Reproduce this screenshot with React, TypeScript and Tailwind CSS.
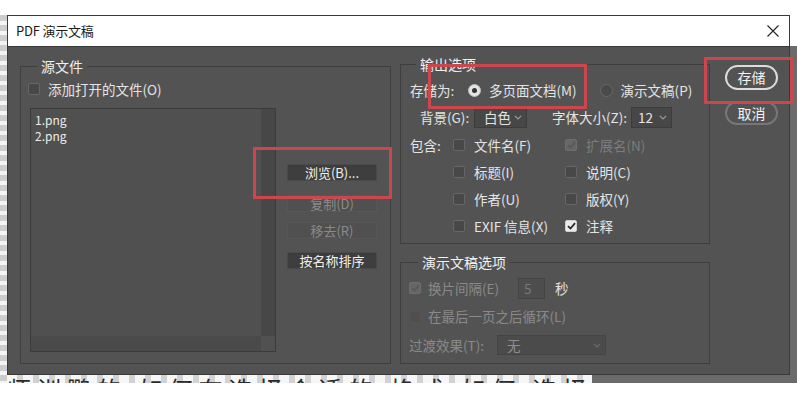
import React from "react";

const FONT = "font-['Microsoft_YaHei','Noto_Sans_CJK_SC','Noto_Sans',sans-serif]";

function Check({ checked = false, disabled = false }: { checked?: boolean; disabled?: boolean }) {
  let cls = "bg-[#484848] border-[#666]";
  if (checked && !disabled) cls = "bg-[#ececec] border-[#cfcfcf]";
  if (disabled && checked) cls = "bg-[#666] border-[#6e6e6e]";
  if (disabled && !checked) cls = "bg-[#4f4f4f] border-[#555]";
  return (
    <span className={`w-[12px] h-[12px] shrink-0 rounded-[2px] border flex items-center justify-center ${cls}`}>
      {checked && (
        <svg width="9" height="8" viewBox="0 0 9 8">
          <path
            d="M1 4.2 L3.5 6.5 L8 1.2"
            fill="none"
            stroke={disabled ? "#595959" : "#2a2a2a"}
            strokeWidth="1.8"
          />
        </svg>
      )}
    </span>
  );
}

function Radio({ on = false }: { on?: boolean }) {
  return on ? (
    <span className="w-[13px] h-[13px] rounded-full bg-[#e4e4e4] border border-[#bdbdbd] flex items-center justify-center shrink-0">
      <span className="w-[5px] h-[5px] rounded-full bg-[#333]" />
    </span>
  ) : (
    <span className="block w-[13px] h-[13px] rounded-full bg-[#4a4a4a] border border-[#686868] shrink-0" />
  );
}

function Chevron({ color = "#9a9a9a" }: { color?: string }) {
  return (
    <svg width="8" height="5" viewBox="0 0 8 5">
      <path d="M0.8 0.8 L4 4 L7.2 0.8" fill="none" stroke={color} strokeWidth="1.2" />
    </svg>
  );
}

function Btn({ children, disabled = false, mt }: { children: React.ReactNode; disabled?: boolean; mt: string }) {
  return (
    <div
      className={`${mt} h-[17px] w-[90px] flex items-center justify-center text-[13px] leading-none border ${
        disabled
          ? "bg-[#505050] border-[#575757] text-[#8a8a8a]"
          : "bg-[#3e3e3e] border-[#4a4a4a] text-[#f0f0f0]"
      }`}
    >
      {children}
    </div>
  );
}

export default function App() {
  return (
    <div className={`relative w-[797px] h-[399px] bg-white overflow-hidden ${FONT}`}>
      <div className="h-[15px]" />
      <div className="flex">
        <div className="w-[7px] h-[368px] bg-[repeating-linear-gradient(to_bottom,#cdcdcd_0px,#cdcdcd_6px,#f4f4f4_6px,#f4f4f4_10px)]" />
        <div className="flex flex-col w-[790px]">
          <div className="flex">
            {/* Dialog */}
            <div className="w-[783px] h-[360px] border border-[#3a3a3a] flex flex-col">
              {/* Title bar */}
              <div className="h-[31px] bg-white border-b border-[#3a3a3a] flex items-center justify-between pl-[8px] pr-[10px] shrink-0">
                <span className="text-[13px] text-[#1a1a1a] tracking-[-0.2px]">PDF 演示文稿</span>
                <svg width="12" height="12" viewBox="0 0 12 12">
                  <path d="M0.5 0.5 L11.5 11.5 M11.5 0.5 L0.5 11.5" stroke="#222" strokeWidth="1.1" />
                </svg>
              </div>
              {/* Body */}
              <div className="flex-1 bg-[#535353] flex items-start pl-[12px] text-[13.5px] text-[#e4e4e4]">
                {/* Source files */}
                <fieldset className="mt-[9px] w-[371px] h-[308px] border border-[#3f3f3f] p-0 m-0 min-w-0">
                  <legend className="ml-[16px] px-[4px] h-[20px] leading-[20px] text-[14px] text-[#f0f0f0]">源文件</legend>
                  <div className="pl-[7px] flex flex-col">
                    <div className="mt-[2px] h-[22px] flex items-center gap-[8px]">
                      <Check />
                      <span>添加打开的文件(O)</span>
                    </div>
                    <div className="mt-[8px] flex items-start">
                      <div className="ml-[2px] w-[246px] h-[244px] border border-[#3b3b3b] bg-[#505050] flex flex-col">
                        <div className="flex flex-1">
                          <div className="flex-1 pl-[4px] pt-[3px] text-[12px] leading-[16px] text-[#ececec]">
                            <div>1.png</div>
                            <div>2.png</div>
                          </div>
                          <div className="w-[14px] bg-[#474747] border-l border-[#4a4a4a]" />
                        </div>
                        <div className="h-[15px] flex">
                          <div className="flex-1 bg-[#4a4a4a] border-t border-[#4c4c4c]" />
                          <div className="w-[14px] bg-[#515151]" />
                        </div>
                      </div>
                      <div className="ml-[11px] flex flex-col">
                        <Btn mt="mt-[56px]">浏览(B)...</Btn>
                        <Btn mt="mt-[14px]" disabled>复制(D)</Btn>
                        <Btn mt="mt-[10px]" disabled>移去(R)</Btn>
                        <Btn mt="mt-[13px]">按名称排序</Btn>
                      </div>
                    </div>
                  </div>
                </fieldset>

                {/* Right column */}
                <div className="ml-[9px] w-[310px] flex flex-col">
                  <fieldset className="mt-[7px] h-[190px] border border-[#3f3f3f] p-0 m-0 min-w-0">
                    <legend className="ml-[15px] px-[4px] h-[20px] leading-[20px] text-[14px] text-[#f0f0f0]">输出选项</legend>
                    <div className="pl-[9px] flex flex-col">
                      <div className="mt-[5px] h-[22px] flex items-center">
                        <span className="w-[58px]">存储为:</span>
                        <Radio on />
                        <span className="ml-[8px]">多页面文档(M)</span>
                        <span className="ml-[23px] flex"><Radio /></span>
                        <span className="ml-[8px]">演示文稿(P)</span>
                      </div>
                      <div className="mt-[6px] h-[21px] flex items-center">
                        <span className="pl-[10px] w-[64px]">背景(G):</span>
                        <div className="w-[53px] h-[21px] bg-[#474747] border border-[#3c3c3c] flex items-center justify-between pl-[9px] pr-[4px]">
                          <span>白色</span>
                          <Chevron />
                        </div>
                        <span className="ml-[25px] w-[79px]">字体大小(Z):</span>
                        <div className="w-[41px] h-[21px] bg-[#474747] border border-[#3c3c3c] flex items-center justify-between pl-[6px] pr-[4px]">
                          <span>12</span>
                          <Chevron />
                        </div>
                      </div>
                      <div className="mt-[6px] h-[22px] flex items-center">
                        <span className="w-[43px]">包含:</span>
                        <div className="w-[112px] flex items-center gap-[9px]"><Check /><span>文件名(F)</span></div>
                        <div className="flex items-center gap-[9px] text-[#7c7c7c]"><Check checked disabled /><span>扩展名(N)</span></div>
                      </div>
                      <div className="mt-[5px] h-[22px] flex items-center">
                        <span className="w-[43px]" />
                        <div className="w-[112px] flex items-center gap-[9px]"><Check /><span>标题(I)</span></div>
                        <div className="flex items-center gap-[9px]"><Check /><span>说明(C)</span></div>
                      </div>
                      <div className="mt-[5px] h-[22px] flex items-center">
                        <span className="w-[43px]" />
                        <div className="w-[112px] flex items-center gap-[9px]"><Check /><span>作者(U)</span></div>
                        <div className="flex items-center gap-[9px]"><Check /><span>版权(Y)</span></div>
                      </div>
                      <div className="mt-[5px] h-[22px] flex items-center">
                        <span className="w-[43px]" />
                        <div className="w-[112px] flex items-center gap-[9px]"><Check /><span>EXIF 信息(X)</span></div>
                        <div className="flex items-center gap-[9px]"><Check checked /><span>注释</span></div>
                      </div>
                    </div>
                  </fieldset>

                  <fieldset className="mt-[8px] h-[112px] border border-[#3f3f3f] p-0 m-0 min-w-0">
                    <legend className="ml-[17px] px-[4px] h-[20px] leading-[20px] text-[14px] text-[#f0f0f0]">演示文稿选项</legend>
                    <div className="pl-[8px] flex flex-col text-[#8a8a8a]">
                      <div className="mt-[5px] h-[22px] flex items-center">
                        <Check checked disabled />
                        <span className="ml-[7px] w-[90px]">换片间隔(E)</span>
                        <div className="w-[27px] h-[21px] bg-[#4d4d4d] border border-[#444] flex items-center pl-[5px] text-[#7a7a7a]">5</div>
                        <span className="ml-[10px] text-[#e4e4e4]">秒</span>
                      </div>
                      <div className="mt-[7px] h-[21px] flex items-center">
                        <Check disabled />
                        <span className="ml-[7px]">在最后一页之后循环(L)</span>
                      </div>
                      <div className="mt-[8px] h-[20px] flex items-center">
                        <span className="w-[88px]">过渡效果(T):</span>
                        <div className="w-[109px] h-[20px] bg-[#4b4b4b] border border-[#444] flex items-center justify-between pl-[9px] pr-[4px]">
                          <span className="text-[#8e8e8e]">无</span>
                          <Chevron color="#6e6e6e" />
                        </div>
                      </div>
                    </div>
                  </fieldset>
                </div>

                {/* Buttons */}
                <div className="ml-[15px] flex flex-col">
                  <div className="mt-[18px] w-[53px] h-[25px] rounded-full border-2 border-[#dcdcdc] flex items-center justify-center text-[14px] text-[#f2f2f2]">
                    存储
                  </div>
                  <div className="mt-[11px] w-[53px] h-[24px] rounded-full border-2 border-[#777] flex items-center justify-center text-[14px] text-[#f2f2f2]">
                    取消
                  </div>
                </div>
              </div>
            </div>
            <div className="w-[7px] flex flex-col">
              <div className="h-[31px] bg-white" />
              <div className="flex-1 bg-[#6b6b6b]" />
            </div>
          </div>
          <div className="flex h-[8px]">
            <div className="w-[585px] overflow-hidden bg-[repeating-linear-gradient(to_right,#f6f6f6_0px,#f6f6f6_10px,#d2d2d2_10px,#d2d2d2_16px)]">
              <div className="text-[24px] leading-[14px] pt-[7px] text-[#2a2a2a] whitespace-nowrap tracking-[6px]">
                师训鹏的 如何在选择合适的 格式 如何 选择
              </div>
            </div>
            <div className="flex-1 bg-[#6b6b6b]" />
          </div>
        </div>
      </div>

      {/* Red annotation boxes */}
      <div className="absolute left-[428px] top-[64px] w-[159px] h-[45px] border-[3px] border-[#cc474d]" />
      <div className="absolute left-[253px] top-[147px] w-[139px] h-[52px] border-[3px] border-[#cc474d]" />
      <div className="absolute left-[704px] top-[57px] w-[89px] h-[47px] border-[3px] border-[#cc474d]" />
    </div>
  );
}
